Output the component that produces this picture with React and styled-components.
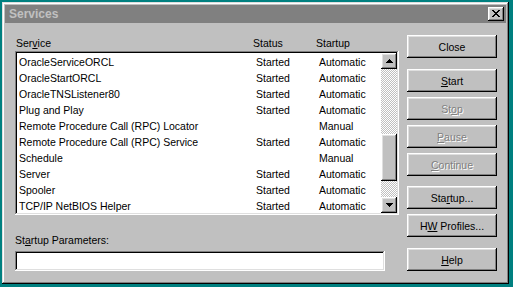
import React from 'react';
import styled, { createGlobalStyle } from 'styled-components';

const GlobalStyle = createGlobalStyle`
  html, body { margin: 0; padding: 0; }
  body {
    background: #008080;
    font-family: "Liberation Sans", Arial, sans-serif;
    font-size: 10.5px;
    color: #000;
  }
`;

const raised = `
  box-shadow: inset -1px -1px #000, inset 1px 1px #fff,
    inset -2px -2px #808080, inset 2px 2px #dfdfdf;
`;

const sunken = `
  box-shadow: inset -1px -1px #fff, inset 1px 1px #808080,
    inset -2px -2px #dfdfdf, inset 2px 2px #000;
`;

const Desktop = styled.div`
  width: 513px;
  height: 287px;
  padding: 2px;
  box-sizing: border-box;
`;

const Window = styled.div`
  width: 507px;
  height: 282px;
  box-sizing: border-box;
  padding: 3px;
  background: #c0c0c0;
  display: flex;
  flex-direction: column;
  box-shadow: inset -1px -1px #000, inset 1px 1px #dfdfdf,
    inset -2px -2px #808080, inset 2px 2px #fff;
`;

const TitleBar = styled.div`
  height: 18px;
  background: #808080;
  display: flex;
  align-items: center;
  justify-content: space-between;
  padding: 0 2px 0 4px;
`;

const Title = styled.span`
  color: #c0c0c0;
  font-weight: bold;
  font-size: 12px;
`;

const CloseBox = styled.div`
  width: 16px;
  height: 14px;
  background: #c0c0c0;
  display: flex;
  align-items: center;
  justify-content: center;
  ${raised}
  svg { display: block; margin: 0 1px 1px 0; }
`;

const Body = styled.div`
  display: flex;
  gap: 8px;
  padding: 12px 9px 0 10px;
`;

const LeftCol = styled.div`
  width: 384px;
  display: flex;
  flex-direction: column;
`;

const HeaderRow = styled.div`
  display: grid;
  grid-template-columns: 237px 63px 1fr;
  padding-left: 1px;
  height: 16px;
  line-height: 16px;
`;

const ListBox = styled.div`
  height: 164px;
  box-sizing: border-box;
  padding: 2px;
  background: #fff;
  display: flex;
  ${sunken}
`;

const Rows = styled.div`
  flex: 1;
  padding-left: 2px;
`;

const Row = styled.div`
  display: grid;
  grid-template-columns: 237px 63px 1fr;
  height: 16px;
  box-sizing: border-box;
  padding-top: 1px;
  line-height: 16px;
  white-space: nowrap;
`;

const ScrollBar = styled.div`
  width: 16px;
  display: flex;
  flex-direction: column;
`;

const ScrollButton = styled.div`
  width: 16px;
  height: 16px;
  background: #c0c0c0;
  display: flex;
  align-items: center;
  justify-content: center;
  ${raised}
  svg { display: block; }
`;

const Track = styled.div`
  flex: 1;
  background: repeating-conic-gradient(#c0c0c0 0 25%, #fff 0 50%) 0 0 / 2px 2px;
`;

const Thumb = styled.div`
  margin-top: 65px;
  height: 47px;
  background: #c0c0c0;
  ${raised}
`;

const Label = styled.div`
  margin-top: 17px;
  line-height: 16px;
`;

const TextBox = styled.input`
  margin: 3px 0 0;
  width: 370px;
  height: 20px;
  box-sizing: border-box;
  border: none;
  outline: none;
  padding: 2px 4px;
  background: #fff;
  font: inherit;
  ${sunken}
`;

const RightCol = styled.div`
  width: 90px;
  display: flex;
  flex-direction: column;
`;

const Button = styled.div`
  height: 23px;
  margin-top: ${p => p.$gap}px;
  box-sizing: border-box;
  background: #c0c0c0;
  display: flex;
  align-items: center;
  justify-content: center;
  color: ${p => (p.$disabled ? '#808080' : '#000')};
  text-shadow: ${p => (p.$disabled ? '1px 1px 0 #fff' : 'none')};
  ${raised}
`;

const Key = styled.span`
  text-decoration: underline;
`;

const services = [
  ['OracleServiceORCL', 'Started', 'Automatic'],
  ['OracleStartORCL', 'Started', 'Automatic'],
  ['OracleTNSListener80', 'Started', 'Automatic'],
  ['Plug and Play', 'Started', 'Automatic'],
  ['Remote Procedure Call (RPC) Locator', '', 'Manual'],
  ['Remote Procedure Call (RPC) Service', 'Started', 'Automatic'],
  ['Schedule', '', 'Manual'],
  ['Server', 'Started', 'Automatic'],
  ['Spooler', 'Started', 'Automatic'],
  ['TCP/IP NetBIOS Helper', 'Started', 'Automatic'],
];

const buttons = [
  { pre: 'Close', key: '', post: '', gap: 0 },
  { pre: '', key: 'S', post: 'tart', gap: 11 },
  { pre: 'St', key: 'o', post: 'p', gap: 5, disabled: true },
  { pre: '', key: 'P', post: 'ause', gap: 5, disabled: true },
  { pre: '', key: 'C', post: 'ontinue', gap: 5, disabled: true },
  { pre: 'Sta', key: 'r', post: 'tup...', gap: 10 },
  { pre: 'H', key: 'W', post: ' Profiles...', gap: 5 },
  { pre: '', key: 'H', post: 'elp', gap: 11 },
];

const closePixels = [
  '11....11',
  '.11..11.',
  '..1111..',
  '...11...',
  '..1111..',
  '.11..11.',
  '11....11',
];

function CloseGlyph() {
  return (
    <svg width="8" height="7" viewBox="0 0 8 7" shapeRendering="crispEdges">
      {closePixels.flatMap((line, y) =>
        line.split('').map((c, x) =>
          c === '1' ? <rect key={`${x}-${y}`} x={x} y={y} width="1" height="1" fill="#000" /> : null
        )
      )}
    </svg>
  );
}

function Arrow({ down }) {
  return (
    <svg width="7" height="4" viewBox="0 0 7 4" shapeRendering="crispEdges">
      <polygon points={down ? '0,0 7,0 3.5,4' : '3.5,0 7,4 0,4'} fill="#000" />
    </svg>
  );
}

export default function App() {
  return (
    <Desktop>
      <GlobalStyle />
      <Window>
        <TitleBar>
          <Title>Services</Title>
          <CloseBox><CloseGlyph /></CloseBox>
        </TitleBar>
        <Body>
          <LeftCol>
            <HeaderRow>
              <span>Ser<Key>v</Key>ice</span>
              <span>Status</span>
              <span>Startup</span>
            </HeaderRow>
            <ListBox>
              <Rows>
                {services.map(([name, status, startup]) => (
                  <Row key={name}>
                    <span>{name}</span>
                    <span>{status}</span>
                    <span>{startup}</span>
                  </Row>
                ))}
              </Rows>
              <ScrollBar>
                <ScrollButton><Arrow /></ScrollButton>
                <Track><Thumb /></Track>
                <ScrollButton><Arrow down /></ScrollButton>
              </ScrollBar>
            </ListBox>
            <Label>St<Key>a</Key>rtup Parameters:</Label>
            <TextBox readOnly value="" />
          </LeftCol>
          <RightCol>
            {buttons.map(b => (
              <Button key={b.pre + b.key + b.post} $gap={b.gap} $disabled={b.disabled}>
                <span>{b.pre}{b.key && <Key>{b.key}</Key>}{b.post}</span>
              </Button>
            ))}
          </RightCol>
        </Body>
      </Window>
    </Desktop>
  );
}
